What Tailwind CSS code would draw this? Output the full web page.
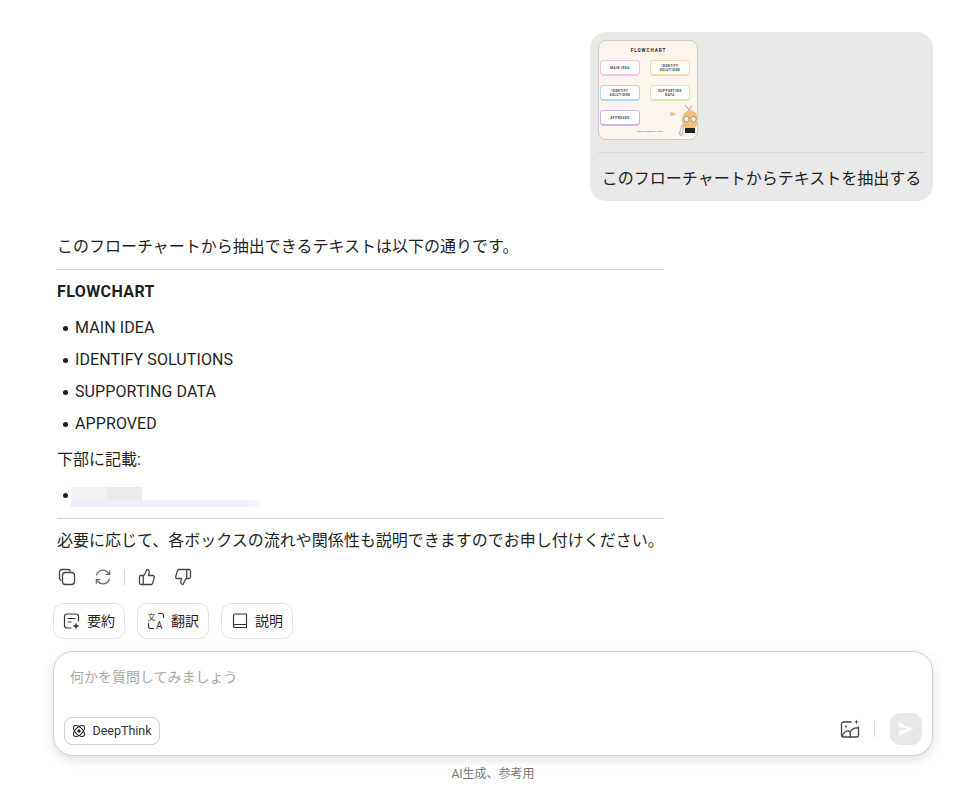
<!DOCTYPE html>
<html lang="ja">
<head>
<meta charset="UTF-8">
<meta name="viewport" content="width=device-width, initial-scale=1.0">
<title>DeepThink</title>
<script src="https://cdn.jsdelivr.net/npm/@tailwindcss/browser@4"></script>
</head>
<body class="bg-white text-[#1f1f1f] font-['Roboto','Noto_Sans_CJK_JP',sans-serif] overflow-hidden">
<div class="w-[968px] h-[786px] pl-[53px] pr-[35px] pt-8 flex flex-col">

  <!-- user message -->
  <div class="self-end w-[343px] h-[169px] bg-[#e9e9e9] rounded-[16px] p-2">
    <div class="w-[100px] h-[100px] rounded-lg border border-[#cfcac4] bg-[#fbf5ee] overflow-hidden flex flex-col items-start pl-px pt-[7px]">
      <div class="w-full text-center text-[4.5px] leading-[6px] font-bold tracking-[1px] text-[#222] mb-[6px]">FLOWCHART</div>
      <div class="grid grid-cols-[40px_40px] gap-x-[10px] gap-y-[9px] text-[3px] leading-[4px] font-bold tracking-[0.5px] text-center text-[#333]">
        <div class="h-[16px] px-2 rounded-[4px] bg-white border border-[#f0c4e6] border-b-2 flex items-center justify-center">MAIN IDEA</div>
        <div class="h-[16px] px-2 rounded-[4px] bg-white border border-[#f6d9a9] border-b-2 flex items-center justify-center">IDENTIFY SOLUTIONS</div>
        <div class="h-[16px] px-2 rounded-[4px] bg-white border border-[#a9d8f3] border-b-2 flex items-center justify-center">IDENTIFY SOLUTIONS</div>
        <div class="h-[16px] px-2 rounded-[4px] bg-white border border-[#d4e6ae] border-b-2 flex items-center justify-center">SUPPORTING DATA</div>
        <div class="h-[16px] px-1 rounded-[4px] bg-white border border-[#cdb5ee] border-b-2 flex items-center justify-center">APPROVED</div>
        <div class="h-[16px] flex justify-end">
          <svg width="30" height="34" viewBox="0 0 30 34" class="mt-[-5px] mr-[-10px] shrink-0">
            <ellipse cx="2" cy="9" rx="3.500" ry="1.800" fill="#f2c48d"/>
            <path d="M15 0l4 5 3-4" stroke="#777" fill="none" stroke-width=".7"/>
            <ellipse cx="20" cy="15" rx="8" ry="10" fill="#f5bd78"/>
            <circle cx="16.500" cy="14" r="2.600" fill="#fff" stroke="#555" stroke-width=".5"/>
            <circle cx="23.500" cy="14" r="2.600" fill="#fff" stroke="#555" stroke-width=".5"/>
            <rect x="15" y="23" width="10" height="5" fill="#222"/>
            <path d="M9 29l3-9 2 1-2 10z" fill="#e5e5e5" stroke="#777" stroke-width=".4"/>
            <path d="M0 34c4-4 14-4 20 0z" fill="#fff"/>
          </svg>
        </div>
      </div>
      <div class="w-[60px] text-center text-[2.500px] leading-[3px] tracking-[0.3px] text-[#555] mt-[4px] ml-[20px] whitespace-nowrap">www.example.com</div>
    </div>
    <div class="h-px bg-[#d8d8d8] mt-3"></div>
    <p class="text-[16px] leading-6 mt-[14px] text-center whitespace-nowrap">このフローチャートからテキストを抽出する</p>
  </div>

  <!-- answer -->
  <div class="pl-1 mt-[33px] w-[611px] text-[16px] leading-6">
    <p class="pt-px">このフローチャートから抽出できるテキストは以下の通りです。</p>
    <hr class="border-[#cfcfcf] mt-[10px]">
    <p class="font-bold mt-[10px] tracking-[0.4px]">FLOWCHART</p>
    <ul class="mt-3 flex flex-col gap-2 tracking-[0.1px]">
      <li class="flex items-center"><span class="w-[5px] h-[5px] rounded-full bg-[#1f1f1f] ml-[6px] mr-[7px]"></span>MAIN IDEA</li>
      <li class="flex items-center"><span class="w-[5px] h-[5px] rounded-full bg-[#1f1f1f] ml-[6px] mr-[7px]"></span>IDENTIFY SOLUTIONS</li>
      <li class="flex items-center"><span class="w-[5px] h-[5px] rounded-full bg-[#1f1f1f] ml-[6px] mr-[7px]"></span>SUPPORTING DATA</li>
      <li class="flex items-center"><span class="w-[5px] h-[5px] rounded-full bg-[#1f1f1f] ml-[6px] mr-[7px]"></span>APPROVED</li>
    </ul>
    <p class="mt-3">下部に記載:</p>
    <!-- redacted url -->
    <div class="mt-[15px] h-5 flex items-start">
      <span class="w-[5px] h-[5px] rounded-full bg-[#1f1f1f] ml-[6px] mr-[3px] mt-[6px]"></span>
      <div class="flex flex-col">
        <div class="flex h-[13px]">
          <div class="w-[36px] bg-[#f3f3f3]"></div>
          <div class="w-[35px] bg-[#ebebeb]"></div>
        </div>
        <div class="flex h-[7px]">
          <div class="w-[178px] bg-[#efeefb]"></div>
          <div class="w-[12px] bg-[#f8f7fd]"></div>
        </div>
      </div>
    </div>
    <hr class="border-[#cfcfcf] mt-[11px]">
    <p class="mt-[10px] whitespace-nowrap">必要に応じて、各ボックスの流れや関係性も説明できますのでお申し付けください。</p>

    <!-- message actions -->
    <div class="flex items-center mt-[15px] h-[18px] text-[#444]">
      <svg class="ml-[1px]" width="18" height="18" viewBox="0 0 18 18" fill="none" stroke="currentColor" stroke-width="1.300">
        <path d="M3.500 12.500A2.300 2.300 0 0 1 1.500 10.300V4a2.500 2.500 0 0 1 2.500-2.500h6.300a2.300 2.300 0 0 1 2.200 2"/>
        <rect x="4.500" y="4.500" width="12" height="12" rx="3"/>
      </svg>
      <svg class="ml-[18px]" width="18" height="18" viewBox="0 0 18 18" fill="none" stroke="#666" stroke-width="1.200" stroke-linecap="round" stroke-linejoin="round">
        <path d="M2.500 7A6.700 6.700 0 0 1 14 4.500l1.500 1.700"/>
        <path d="M15.700 2.800v3.500h-3.500"/>
        <path d="M15.500 11A6.700 6.700 0 0 1 4 13.500l-1.500-1.700"/>
        <path d="M2.300 15.200v-3.500h3.500"/>
      </svg>
      <div class="w-px h-4 bg-[#d5d5d5] ml-[12px]"></div>
      <svg class="ml-[13px]" width="18" height="18" viewBox="0 0 24 24" fill="none" stroke="currentColor" stroke-width="1.700" stroke-linecap="round" stroke-linejoin="round">
        <path d="M7 10v12"/>
        <path d="M15 5.880 14 10h5.830a2 2 0 0 1 1.920 2.560l-2.330 8A2 2 0 0 1 17.500 22H4a2 2 0 0 1-2-2v-8a2 2 0 0 1 2-2h2.760a2 2 0 0 0 1.790-1.110L12 2a3.130 3.130 0 0 1 3 3.880Z"/>
      </svg>
      <svg class="ml-[18px]" width="18" height="18" viewBox="0 0 24 24" fill="none" stroke="currentColor" stroke-width="1.700" stroke-linecap="round" stroke-linejoin="round">
        <path d="M17 14V2"/>
        <path d="M9 18.120 10 14H4.170a2 2 0 0 1-1.920-2.560l2.330-8A2 2 0 0 1 6.500 2H20a2 2 0 0 1 2 2v8a2 2 0 0 1-2 2h-2.760a2 2 0 0 0-1.790 1.110L12 22a3.130 3.130 0 0 1-3-3.880Z"/>
      </svg>
    </div>
  </div>

  <!-- suggestion chips -->
  <div class="flex gap-3 mt-[17px] text-[14px]">
    <button class="w-[72px] h-9 border border-[#e2e2e2] rounded-[10px] flex items-center justify-center gap-[6px]">
      <svg width="18" height="18" viewBox="0 0 18 18" fill="none" stroke="#333" stroke-width="1.200" stroke-linecap="round">
        <path d="M8 16H4a2.500 2.500 0 0 1-2.500-2.500v-9A2.500 2.500 0 0 1 4 2h9a2.500 2.500 0 0 1 2.500 2.500V9"/>
        <path d="M5 6.500h7M5 10h3"/>
        <path d="M13 10.500l1 2.500 2.500 1-2.500 1-1 2.500-1-2.500-2.500-1 2.500-1z" fill="#333" stroke="none"/>
      </svg>
      要約
    </button>
    <button class="w-[72px] h-9 border border-[#e2e2e2] rounded-[10px] flex items-center justify-center gap-[6px]">
      <svg width="18" height="18" viewBox="0 0 18 18" fill="none" stroke="#333" stroke-width="1.200" stroke-linecap="round">
        <text x="0.500" y="8" font-size="8" fill="#333" stroke="none">文</text>
        <text x="9" y="17" font-size="10" fill="#333" stroke="none">A</text>
        <path d="M11.500 1.500h3a2 2 0 0 1 2 2v2"/>
        <path d="M6.500 16.500h-3a2 2 0 0 1-2-2v-3"/>
      </svg>
      翻訳
    </button>
    <button class="w-[72px] h-9 border border-[#e2e2e2] rounded-[10px] flex items-center justify-center gap-[6px]">
      <svg width="18" height="18" viewBox="0 0 18 18" fill="none" stroke="#333" stroke-width="1.100" stroke-linejoin="round">
        <path d="M2.500 14V3.500A1.500 1.500 0 0 1 4 2H15.500v10.500H4A1.500 1.500 0 0 0 2.500 14a1.500 1.500 0 0 0 1.500 1.500h11.500v-3"/>
      </svg>
      説明
    </button>
  </div>

  <!-- input box -->
  <div class="mt-[12px] h-[105px] border border-[#cfcfcf] rounded-[20px] bg-white shadow-[0_4px_12px_rgba(0,0,0,0.12)] pl-[10px] pr-[10px] flex flex-col">
    <p class="mt-[15px] ml-[6px] text-[14px] leading-5 text-[#a8a8a8]">何かを質問してみましょう</p>
    <div class="mt-auto mb-[10px] flex items-end">
      <button class="w-[96px] h-7 border border-[#d0d0d0] rounded-lg flex items-center justify-center gap-[6px] text-[12.500px] text-[#333]">
        <svg width="14" height="14" viewBox="0 0 14 14" fill="none" stroke="#222" stroke-width="1">
          <ellipse cx="7" cy="7" rx="7" ry="3.600" transform="rotate(45 7 7)"/>
          <ellipse cx="7" cy="7" rx="7" ry="3.600" transform="rotate(-45 7 7)"/>
          <circle cx="7" cy="7" r="1.200" fill="#222"/>
        </svg>
        DeepThink
      </button>
      <svg class="ml-auto self-center" width="20" height="20" viewBox="0 0 20 20" fill="none" stroke="#444" stroke-width="1.300" stroke-linecap="round" stroke-linejoin="round">
        <path d="M11 3H3.500A2 2 0 0 0 1.500 5v11a2 2 0 0 0 2 2h13a2 2 0 0 0 2-2V8"/>
        <circle cx="6" cy="7.500" r="1" fill="#444" stroke="none"/>
        <path d="M2 17c2-4 5-5.500 7-5 1.500.5 1.500 4 1 6"/>
        <path d="M10 13c2-3 5-4.500 8-4"/>
        <path d="M16.500 0.500l.6 1.900 1.900.6-1.900.6-.6 1.900-.6-1.900-1.900-.6 1.900-.6z" fill="#444" stroke="none"/>
      </svg>
      <div class="w-px h-4 bg-[#dcdcdc] ml-[14px] self-center"></div>
      <div class="ml-[15px] w-8 h-8 rounded-[10px] bg-[#e8e8e8] flex items-center justify-center">
        <svg width="18" height="16" viewBox="0 0 16 14"><path d="M1 1l14 6-14 6 1.500-5H8V6H2.500z" fill="#fff"/></svg>
      </div>
    </div>
  </div>
  <p class="mt-[10px] text-center text-[12px] leading-4 text-[#777]">AI生成、参考用</p>
</div>
</body>
</html>
